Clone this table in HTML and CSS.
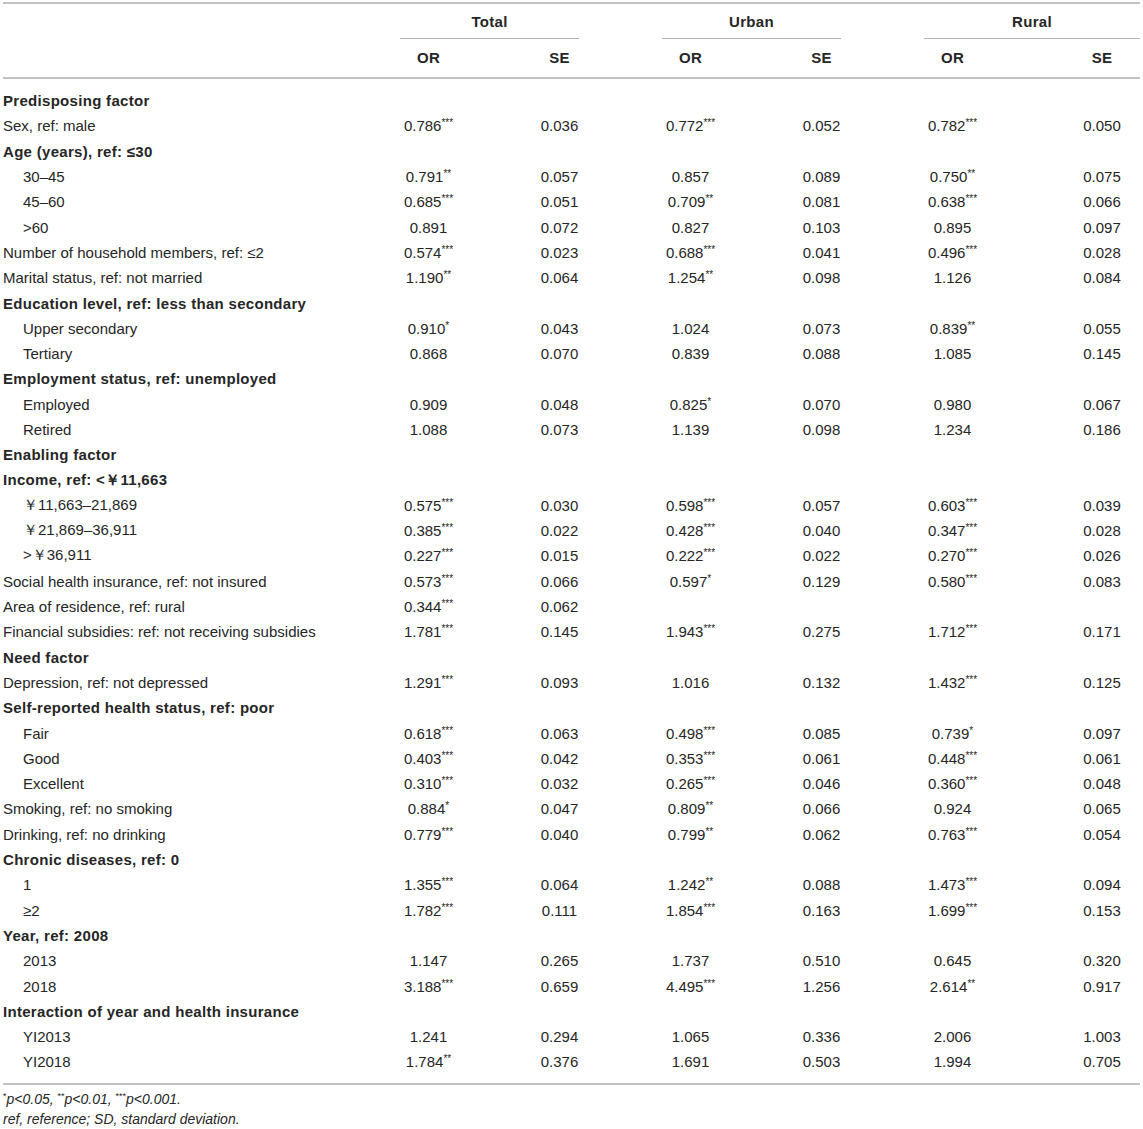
FILE: index.html
```html
<!DOCTYPE html>
<html lang="en">
<head>
<meta charset="utf-8">
<title>Table</title>
<link rel="stylesheet" href="styles.css">
</head>
<body>
<div class="table">
  <div class="thead">
    <div class="row grp">
      <div class="lbl"></div>
      <div class="g"><span>Total</span></div>
      <div class="g"><span>Urban</span></div>
      <div class="g last"><span>Rural</span></div>
    </div>
    <div class="row sub">
      <div class="lbl"></div>
      <div class="c">OR</div><div class="c">SE</div>
      <div class="c">OR</div><div class="c">SE</div>
      <div class="c">OR</div><div class="c end">SE</div>
    </div>
  </div>
  <div class="tbody">
    <div class="row"><div class="lbl b">Predisposing factor</div></div>
    <div class="row"><div class="lbl">Sex, ref: male</div><div class="c">0.786<sup>***</sup></div><div class="c">0.036</div><div class="c">0.772<sup>***</sup></div><div class="c">0.052</div><div class="c">0.782<sup>***</sup></div><div class="c end">0.050</div></div>
    <div class="row"><div class="lbl b">Age (years), ref: ≤30</div></div>
    <div class="row"><div class="lbl in">30–45</div><div class="c">0.791<sup>**</sup></div><div class="c">0.057</div><div class="c">0.857</div><div class="c">0.089</div><div class="c">0.750<sup>**</sup></div><div class="c end">0.075</div></div>
    <div class="row"><div class="lbl in">45–60</div><div class="c">0.685<sup>***</sup></div><div class="c">0.051</div><div class="c">0.709<sup>**</sup></div><div class="c">0.081</div><div class="c">0.638<sup>***</sup></div><div class="c end">0.066</div></div>
    <div class="row"><div class="lbl in">&gt;60</div><div class="c">0.891</div><div class="c">0.072</div><div class="c">0.827</div><div class="c">0.103</div><div class="c">0.895</div><div class="c end">0.097</div></div>
    <div class="row"><div class="lbl">Number of household members, ref: ≤2</div><div class="c">0.574<sup>***</sup></div><div class="c">0.023</div><div class="c">0.688<sup>***</sup></div><div class="c">0.041</div><div class="c">0.496<sup>***</sup></div><div class="c end">0.028</div></div>
    <div class="row"><div class="lbl">Marital status, ref: not married</div><div class="c">1.190<sup>**</sup></div><div class="c">0.064</div><div class="c">1.254<sup>**</sup></div><div class="c">0.098</div><div class="c">1.126</div><div class="c end">0.084</div></div>
    <div class="row"><div class="lbl b">Education level, ref: less than secondary</div></div>
    <div class="row"><div class="lbl in">Upper secondary</div><div class="c">0.910<sup>*</sup></div><div class="c">0.043</div><div class="c">1.024</div><div class="c">0.073</div><div class="c">0.839<sup>**</sup></div><div class="c end">0.055</div></div>
    <div class="row"><div class="lbl in">Tertiary</div><div class="c">0.868</div><div class="c">0.070</div><div class="c">0.839</div><div class="c">0.088</div><div class="c">1.085</div><div class="c end">0.145</div></div>
    <div class="row"><div class="lbl b">Employment status, ref: unemployed</div></div>
    <div class="row"><div class="lbl in">Employed</div><div class="c">0.909</div><div class="c">0.048</div><div class="c">0.825<sup>*</sup></div><div class="c">0.070</div><div class="c">0.980</div><div class="c end">0.067</div></div>
    <div class="row"><div class="lbl in">Retired</div><div class="c">1.088</div><div class="c">0.073</div><div class="c">1.139</div><div class="c">0.098</div><div class="c">1.234</div><div class="c end">0.186</div></div>
    <div class="row"><div class="lbl b">Enabling factor</div></div>
    <div class="row"><div class="lbl b">Income, ref: &lt;￥11,663</div></div>
    <div class="row"><div class="lbl in">￥11,663–21,869</div><div class="c">0.575<sup>***</sup></div><div class="c">0.030</div><div class="c">0.598<sup>***</sup></div><div class="c">0.057</div><div class="c">0.603<sup>***</sup></div><div class="c end">0.039</div></div>
    <div class="row"><div class="lbl in">￥21,869–36,911</div><div class="c">0.385<sup>***</sup></div><div class="c">0.022</div><div class="c">0.428<sup>***</sup></div><div class="c">0.040</div><div class="c">0.347<sup>***</sup></div><div class="c end">0.028</div></div>
    <div class="row"><div class="lbl in">&gt;￥36,911</div><div class="c">0.227<sup>***</sup></div><div class="c">0.015</div><div class="c">0.222<sup>***</sup></div><div class="c">0.022</div><div class="c">0.270<sup>***</sup></div><div class="c end">0.026</div></div>
    <div class="row"><div class="lbl">Social health insurance, ref: not insured</div><div class="c">0.573<sup>***</sup></div><div class="c">0.066</div><div class="c">0.597<sup>*</sup></div><div class="c">0.129</div><div class="c">0.580<sup>***</sup></div><div class="c end">0.083</div></div>
    <div class="row"><div class="lbl">Area of residence, ref: rural</div><div class="c">0.344<sup>***</sup></div><div class="c">0.062</div></div>
    <div class="row"><div class="lbl">Financial subsidies: ref: not receiving subsidies</div><div class="c">1.781<sup>***</sup></div><div class="c">0.145</div><div class="c">1.943<sup>***</sup></div><div class="c">0.275</div><div class="c">1.712<sup>***</sup></div><div class="c end">0.171</div></div>
    <div class="row"><div class="lbl b">Need factor</div></div>
    <div class="row"><div class="lbl">Depression, ref: not depressed</div><div class="c">1.291<sup>***</sup></div><div class="c">0.093</div><div class="c">1.016</div><div class="c">0.132</div><div class="c">1.432<sup>***</sup></div><div class="c end">0.125</div></div>
    <div class="row"><div class="lbl b">Self-reported health status, ref: poor</div></div>
    <div class="row"><div class="lbl in">Fair</div><div class="c">0.618<sup>***</sup></div><div class="c">0.063</div><div class="c">0.498<sup>***</sup></div><div class="c">0.085</div><div class="c">0.739<sup>*</sup></div><div class="c end">0.097</div></div>
    <div class="row"><div class="lbl in">Good</div><div class="c">0.403<sup>***</sup></div><div class="c">0.042</div><div class="c">0.353<sup>***</sup></div><div class="c">0.061</div><div class="c">0.448<sup>***</sup></div><div class="c end">0.061</div></div>
    <div class="row"><div class="lbl in">Excellent</div><div class="c">0.310<sup>***</sup></div><div class="c">0.032</div><div class="c">0.265<sup>***</sup></div><div class="c">0.046</div><div class="c">0.360<sup>***</sup></div><div class="c end">0.048</div></div>
    <div class="row"><div class="lbl">Smoking, ref: no smoking</div><div class="c">0.884<sup>*</sup></div><div class="c">0.047</div><div class="c">0.809<sup>**</sup></div><div class="c">0.066</div><div class="c">0.924</div><div class="c end">0.065</div></div>
    <div class="row"><div class="lbl">Drinking, ref: no drinking</div><div class="c">0.779<sup>***</sup></div><div class="c">0.040</div><div class="c">0.799<sup>**</sup></div><div class="c">0.062</div><div class="c">0.763<sup>***</sup></div><div class="c end">0.054</div></div>
    <div class="row"><div class="lbl b">Chronic diseases, ref: 0</div></div>
    <div class="row"><div class="lbl in">1</div><div class="c">1.355<sup>***</sup></div><div class="c">0.064</div><div class="c">1.242<sup>**</sup></div><div class="c">0.088</div><div class="c">1.473<sup>***</sup></div><div class="c end">0.094</div></div>
    <div class="row"><div class="lbl in">≥2</div><div class="c">1.782<sup>***</sup></div><div class="c">0.111</div><div class="c">1.854<sup>***</sup></div><div class="c">0.163</div><div class="c">1.699<sup>***</sup></div><div class="c end">0.153</div></div>
    <div class="row"><div class="lbl b">Year, ref: 2008</div></div>
    <div class="row"><div class="lbl in">2013</div><div class="c">1.147</div><div class="c">0.265</div><div class="c">1.737</div><div class="c">0.510</div><div class="c">0.645</div><div class="c end">0.320</div></div>
    <div class="row"><div class="lbl in">2018</div><div class="c">3.188<sup>***</sup></div><div class="c">0.659</div><div class="c">4.495<sup>***</sup></div><div class="c">1.256</div><div class="c">2.614<sup>**</sup></div><div class="c end">0.917</div></div>
    <div class="row"><div class="lbl b">Interaction of year and health insurance</div></div>
    <div class="row"><div class="lbl in">YI2013</div><div class="c">1.241</div><div class="c">0.294</div><div class="c">1.065</div><div class="c">0.336</div><div class="c">2.006</div><div class="c end">1.003</div></div>
    <div class="row"><div class="lbl in">YI2018</div><div class="c">1.784<sup>**</sup></div><div class="c">0.376</div><div class="c">1.691</div><div class="c">0.503</div><div class="c">1.994</div><div class="c end">0.705</div></div>
  </div>
</div>
<div class="notes">
  <p><sup>*</sup><i>p</i>&lt;0.05, <sup>**</sup><i>p</i>&lt;0.01, <sup>***</sup><i>p</i>&lt;0.001.</p>
  <p>ref, reference; SD, standard deviation.</p>
</div>
</body>
</html>
```

FILE: styles.css
```css
html, body {
  margin: 0;
  padding: 0;
  background: #fff;
}
body {
  padding: 2px 3px 0 3px;
  font-family: "Liberation Sans", Arial, sans-serif;
  font-size: 15px;
  color: #262626;
}
.table {
  width: 1137px;
  border-top: 2px solid #c2c2c2;
  border-bottom: 2px solid #c2c2c2;
}
.row {
  display: grid;
  grid-template-columns: 360px repeat(5, 131px) 122px;
  height: 25.3px;
  align-items: center;
}
.thead {
  border-bottom: 2px solid #c2c2c2;
}
.thead .row {
  height: auto;
  font-weight: bold;
  line-height: 20px;
  letter-spacing: 0.3px;
}
.grp {
  padding-top: 8px;
  align-items: end;
}
.g {
  grid-column: span 2;
  padding: 0 46px 0 37px;
  text-align: center;
}
.g span {
  display: block;
  padding-bottom: 6px;
  border-bottom: 1px solid #b3b3b3;
}
.g.last {
  padding-right: 0;
}
.sub {
  padding: 9px 0;
}
.tbody {
  padding: 9px 0 8px;
}
.lbl {
  white-space: nowrap;
}
.lbl.b {
  font-weight: bold;
  letter-spacing: 0.3px;
}
.lbl.in {
  padding-left: 20px;
}
.c {
  text-align: center;
  white-space: nowrap;
}
.c.end {
  padding-left: 46px;
}
sup {
  font-size: 10px;
  line-height: 0;
  vertical-align: 5px;
}
.notes {
  margin-top: 4px;
  font-size: 14px;
  font-style: italic;
  line-height: 20px;
}
.notes p {
  margin: 0;
}
.notes sup {
  font-style: normal;
  font-size: 9px;
}
```
